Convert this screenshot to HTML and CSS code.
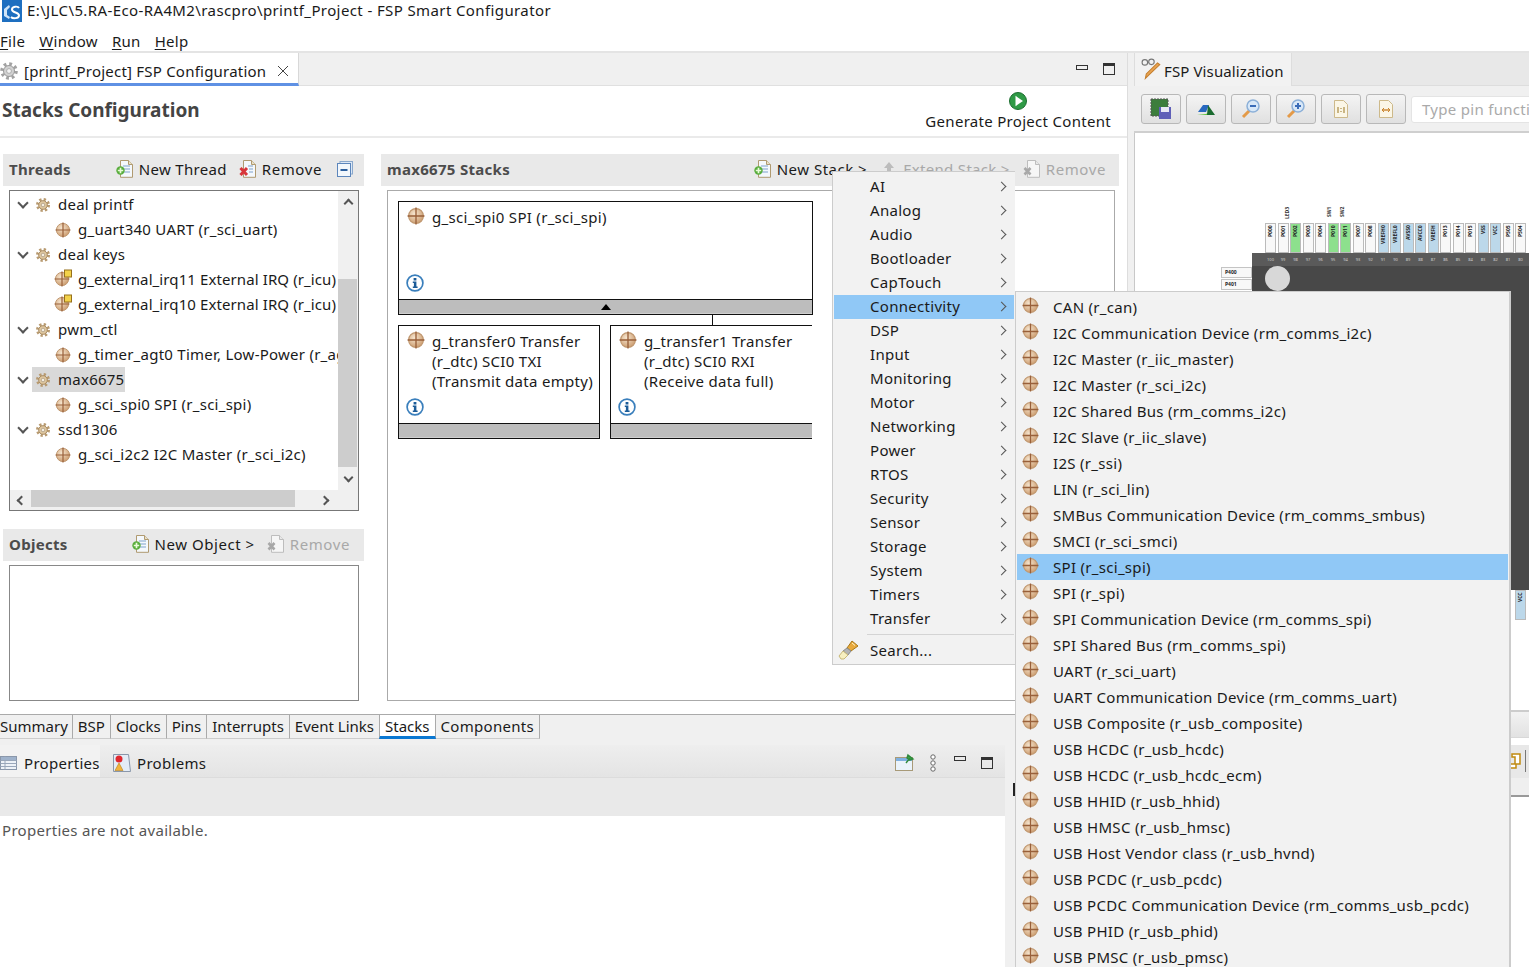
FILE: index.html
```html
<!DOCTYPE html>
<html lang="en">
<head>
<meta charset="utf-8">
<title>FSP Smart Configurator</title>
<link rel="stylesheet" href="styles.css">
</head>
<body>
<svg class="defs" width="0" height="0" aria-hidden="true">
  <defs>
    <radialGradient id="tg" cx="40%" cy="35%" r="70%"><stop offset="0" stop-color="#f6e6d0"/><stop offset="1" stop-color="#cb9a6c"/></radialGradient>
    <symbol id="target" viewBox="0 0 16 16">
      <circle cx="8" cy="8" r="6.6" fill="url(#tg)" stroke="#c09870" stroke-width="1"/>
      <path d="M8 .5v15M.5 8h15" stroke="#99603a" stroke-width="1.200"/>
    </symbol>
    <symbol id="target-irq" viewBox="0 0 18 18">
      <circle cx="8" cy="10" r="6.6" fill="url(#tg)" stroke="#c09870"/>
      <path d="M8 2.500v15M.5 10h15" stroke="#99603a" stroke-width="1.200"/>
      <rect x="10.500" y="1" width="7" height="7" fill="#f3d24a" stroke="#96701c"/>
    </symbol>
    <symbol id="gear" viewBox="0 0 16 16">
      <circle cx="8" cy="8" r="5.500" fill="none" stroke="#b89a70" stroke-width="3" stroke-dasharray="2.200 2.120"/>
      <circle cx="8" cy="8" r="4.300" fill="#e0c8a0" stroke="#a88a60"/>
      <circle cx="8" cy="8" r="1.800" fill="#f6eee0" stroke="#9a8a72" stroke-width=".6"/>
    </symbol>
    <symbol id="gear-gray" viewBox="0 0 18 18">
      <circle cx="9" cy="9" r="7" fill="none" stroke="#a2a2a2" stroke-width="3.600" stroke-dasharray="2.700 2.800"/>
      <circle cx="9" cy="9" r="5.500" fill="#d2d2d2" stroke="#9a9a9a"/>
      <circle cx="9" cy="9" r="2.400" fill="#f4f4f4" stroke="#9a9a9a" stroke-width=".7"/>
    </symbol>
    <symbol id="doc-add" viewBox="0 0 18 18">
      <path d="M4.500 .5h8l4 4v12.800h-12z" fill="#f4f8fc" stroke="#b09a70"/>
      <path d="M7 6h7M7 9h7M7 12h7" stroke="#7fa2cc"/>
      <path d="M12.500 .5v4h4" fill="#e8e0c8" stroke="#b09a70"/>
      <circle cx="4.500" cy="10.500" r="4.200" fill="#58ad3c"/>
      <path d="M4.500 7.800v5.400M1.800 10.500h5.400" stroke="#e8fbd8" stroke-width="1.700"/>
    </symbol>
    <symbol id="doc-del" viewBox="0 0 18 18">
      <path d="M4.500 .5h8l4 4v12.800h-12z" fill="#f4f8fc" stroke="#b09a70"/>
      <path d="M9 6h5M10 9h4M10 12h4" stroke="#7fa2cc"/>
      <path d="M12.500 .5v4h4" fill="#e8e0c8" stroke="#b09a70"/>
      <path d="M1.500 8l6.500 7M8 8l-6.500 7" stroke="#d8363a" stroke-width="3"/>
    </symbol>
    <symbol id="doc-del-off" viewBox="0 0 18 18">
      <path d="M4.500 .5h8l4 4v12.800h-12z" fill="#f6f6f6" stroke="#bdbdbd"/>
      <path d="M12.500 .5v4h4" fill="#e8e8e8" stroke="#bdbdbd"/>
      <path d="M1.500 8l6 6.500M7.500 8l-6 6.500" stroke="#a8a8a8" stroke-width="2.600"/>
    </symbol>
    <symbol id="info" viewBox="0 0 18 18">
      <circle cx="9" cy="9" r="7.900" fill="#fff" stroke="#3a7fbc" stroke-width="1.700"/>
      <path d="M7.600 4h2.800v2.400H7.600zM6.800 7.500h3.600v5h1.200v1.500H6.800v-1.500h1.100V9H6.800z" fill="#1c5c98"/>
    </symbol>
  </defs>
</svg>

<header class="titlebar">
  <svg class="app-icon" viewBox="0 0 22 22"><rect x="2" width="20" height="22" fill="#1e6fc0"/><path d="M4 9l5-4 1 2-3 3v5l3 2-1 2-5-3z" fill="#cfe4f7"/><path d="M19 8c-1-2-7-2-7 1.500 0 3.500 7 2.500 7 6 0 3-6 3.500-8 1.500" fill="none" stroke="#fff" stroke-width="2"/></svg>
  <span>E:\JLC\5.RA-Eco-RA4M2\rascpro\printf_Project - FSP Smart Configurator</span>
</header>
<nav class="menubar">
  <span><u>F</u>ile</span><span><u>W</u>indow</span><span><u>R</u>un</span><span><u>H</u>elp</span>
</nav>

<main class="workbench">
  <section class="editor">
    <div class="editor-tabs">
      <div class="editor-tab">
        <svg class="ic18"><use href="#gear-gray"/></svg>
        <span>[printf_Project] FSP Configuration</span>
        <svg class="close" viewBox="0 0 12 12"><path d="M1 1l10 10M11 1L1 11" stroke="#444" fill="none"/></svg>
      </div>
      <div class="win-buttons">
        <span class="btn-min"></span><span class="btn-max"></span>
      </div>
    </div>
    <div class="form-head">
      <h1>Stacks Configuration</h1>
      <div class="generate">
        <svg class="gen-ic" viewBox="0 0 18 18"><circle cx="9" cy="9" r="8.500" fill="#2f9a46" stroke="#1c6e30"/><path d="M6.500 3.800v10.400L14 9z" fill="#fff"/></svg>
        <span>Generate Project Content</span>
      </div>
    </div>

    <div class="panels">
      <div class="col-left">
        <div class="panel-head threads-head">
          <b>Threads</b>
          <div class="actions">
            <span class="act"><svg class="ic18"><use href="#doc-add"/></svg>New Thread</span>
            <span class="act"><svg class="ic18"><use href="#doc-del"/></svg>Remove</span>
            <svg class="collapse" viewBox="0 0 16 16"><rect x="3" y=".5" width="12.500" height="12.500" fill="#dce8f6" stroke="#8aa8cc"/><rect x=".5" y="2.500" width="13" height="13" fill="#f2f7fc" stroke="#5c86bc"/><path d="M3.500 9h7" stroke="#2c5f9e" stroke-width="2"/></svg>
          </div>
        </div>
        <div class="tree-box">
          <div class="tree">
            <div class="node"><i class="chev"></i><svg class="ic16"><use href="#gear"/></svg><span>deal printf</span></div>
            <div class="leaf"><svg class="ic16"><use href="#target"/></svg><span>g_uart340 UART (r_sci_uart)</span></div>
            <div class="node"><i class="chev"></i><svg class="ic16"><use href="#gear"/></svg><span>deal keys</span></div>
            <div class="leaf"><svg class="ic18"><use href="#target-irq"/></svg><span>g_external_irq11 External IRQ (r_icu)</span></div>
            <div class="leaf"><svg class="ic18"><use href="#target-irq"/></svg><span>g_external_irq10 External IRQ (r_icu)</span></div>
            <div class="node"><i class="chev"></i><svg class="ic16"><use href="#gear"/></svg><span>pwm_ctl</span></div>
            <div class="leaf"><svg class="ic16"><use href="#target"/></svg><span>g_timer_agt0 Timer, Low-Power (r_agt)</span></div>
            <div class="node"><i class="chev"></i><svg class="ic16"><use href="#gear"/></svg><span class="sel">max6675</span></div>
            <div class="leaf"><svg class="ic16"><use href="#target"/></svg><span>g_sci_spi0 SPI (r_sci_spi)</span></div>
            <div class="node"><i class="chev"></i><svg class="ic16"><use href="#gear"/></svg><span>ssd1306</span></div>
            <div class="leaf"><svg class="ic16"><use href="#target"/></svg><span>g_sci_i2c2 I2C Master (r_sci_i2c)</span></div>
          </div>
          <div class="vbar"><i class="up"></i><div class="vtrack"><div class="vthumb"></div></div><i class="down"></i></div>
          <div class="hbar"><i class="left"></i><div class="htrack"><div class="hthumb"></div></div><i class="right"></i></div>
          <div class="corner"></div>
        </div>
        <div class="panel-head objects">
          <b>Objects</b>
          <div class="actions">
            <span class="act"><svg class="ic18"><use href="#doc-add"/></svg>New Object &gt;</span>
            <span class="act off"><svg class="ic18"><use href="#doc-del-off"/></svg>Remove</span>
          </div>
        </div>
        <div class="obj-box"></div>
      </div>

      <div class="col-right">
        <div class="panel-head stacks-head">
          <b>max6675 Stacks</b>
          <div class="actions">
            <span class="act"><svg class="ic18"><use href="#doc-add"/></svg>New Stack &gt;</span>
            <span class="act off"><svg class="ic18" viewBox="0 0 18 18"><path d="M1 13h16v3H1zM7 12V8H4l5-6 5 6h-3v4z" fill="#bcbcbc"/></svg>Extend Stack &gt;</span>
            <span class="act off"><svg class="ic18"><use href="#doc-del-off"/></svg>Remove</span>
          </div>
        </div>
        <div class="stack-box">
          <article class="card card-top">
            <div class="card-title"><svg class="ic18"><use href="#target"/></svg><span>g_sci_spi0 SPI (r_sci_spi)</span></div>
            <svg class="info"><use href="#info"/></svg>
            <div class="card-bar"><i class="tri"></i></div>
          </article>
          <div class="connector"></div>
          <div class="card-row">
            <article class="card">
              <div class="card-title"><svg class="ic18"><use href="#target"/></svg><span>g_transfer0 Transfer (r_dtc) SCI0 TXI (Transmit data empty)</span></div>
              <svg class="info"><use href="#info"/></svg>
              <div class="card-bar"></div>
            </article>
            <article class="card card-open">
              <div class="card-title"><svg class="ic18"><use href="#target"/></svg><span>g_transfer1 Transfer (r_dtc) SCI0 RXI (Receive data full)</span></div>
              <svg class="info"><use href="#info"/></svg>
              <div class="card-bar"></div>
            </article>
          </div>
        </div>
      </div>
    </div>

    <div class="page-tabs">
      <span>Summary</span><span>BSP</span><span>Clocks</span><span>Pins</span><span>Interrupts</span><span>Event Links</span><span class="on">Stacks</span><span class="wide">Components</span>
    </div>

    <div class="lower">
      <div class="props">
        <div class="props-tabs">
          <span class="ptab on">
            <svg class="ic18" viewBox="0 0 18 18"><rect x=".5" y="2.500" width="16" height="13" fill="#eef2f7" stroke="#8a97aa"/><path d="M.5 6.500h16M.5 9.500h16M.5 12.500h16M5 2.500v13" stroke="#9aa7ba"/><rect x="1" y="3" width="15" height="3" fill="#9fb2cb"/></svg>
            Properties</span>
          <span class="ptab">
            <svg class="ic18" viewBox="0 0 18 18"><path d="M.5.5h15l2 17H.5z" fill="#e4ecf6" stroke="#8a97aa"/><circle cx="6" cy="5" r="3.500" fill="#e0282e"/><path d="M6 9l4 7.500H2z" fill="#f2b43c" stroke="#b57e18" stroke-width=".6"/></svg>
            Problems</span>
          <div class="props-tools">
            <svg class="ic20" viewBox="0 0 20 20"><rect x=".5" y="4.500" width="17" height="13" fill="#eaf3fb" stroke="#a89a78"/><rect x="1" y="5" width="16" height="3" fill="#7fb0e0"/><path d="M11 10l4-5M13 2l5 4-3 1-3-2z" stroke="#2f8a3c" fill="#38a848" stroke-width="1.400"/></svg>
            <svg class="dots" viewBox="0 0 8 18"><circle cx="4" cy="3" r="2.200"/><circle cx="4" cy="9" r="2.200"/><circle cx="4" cy="15" r="2.200"/></svg>
            <span class="btn-min"></span><span class="btn-max"></span>
          </div>
        </div>
        <div class="props-band"></div>
        <p class="props-empty">Properties are not available.</p>
      </div>
      <div class="lower-side"><i></i></div>
    </div>
  </section>

  <section class="viz">
    <div class="viz-tabs">
      <div class="viz-tab">
        <svg class="ic22" viewBox="0 0 20 20"><circle cx="3.500" cy="4" r="2.500" fill="none" stroke="#777"/><circle cx="9.500" cy="3.500" r="2.500" fill="none" stroke="#777"/><path d="M6 4h1" stroke="#777"/><path d="M17 6L7 15.500l-3 3 .8-4L15 4.500z" fill="#eaa452" stroke="#c47f2e"/></svg>
        <span>FSP Visualization</span>
      </div>
    </div>
    <div class="viz-tools">
      <button class="tb"><svg viewBox="0 0 22 22"><rect x="1" y="1" width="17" height="17" fill="#3c7d3c" stroke="#555" stroke-dasharray="2 1"/><rect x="9" y="9" width="12" height="12" fill="#5f5fb8"/><rect x="11" y="9" width="8" height="5" fill="#e8e8f4"/></svg></button>
      <button class="tb"><svg viewBox="0 0 22 22"><path d="M3 14l5-7h6l-3 7z" fill="#2868c0"/><path d="M2 17l9-1 2-1v2z" fill="#5ec43c"/><path d="M13 7l7 10h-8z" fill="#1a6b2f"/></svg></button>
      <button class="tb"><svg viewBox="0 0 22 22"><path d="M10 12l-7 7" stroke="#e49a48" stroke-width="3"/><circle cx="13" cy="8" r="6" fill="#d8e8f8" stroke="#8cb0d8" stroke-width="1.500"/><path d="M10 8h6" stroke="#3a6cb8" stroke-width="2"/></svg></button>
      <button class="tb"><svg viewBox="0 0 22 22"><path d="M10 12l-7 7" stroke="#e49a48" stroke-width="3"/><circle cx="13" cy="8" r="6" fill="#d8e8f8" stroke="#8cb0d8" stroke-width="1.500"/><path d="M10 8h6M13 5v6" stroke="#3a6cb8" stroke-width="2"/></svg></button>
      <button class="tb"><svg viewBox="0 0 22 22"><path d="M4.500 2.500h9l4 4v13h-13z" fill="#fbf6e6" stroke="#cdb98a"/><path d="M8 9v6M11 10v1M11 13v1M14 9v6" stroke="#b59a5a" stroke-width="1.400"/></svg></button>
      <button class="tb"><svg viewBox="0 0 22 22"><path d="M4.500 2.500h9l4 4v13h-13z" fill="#fbf6e6" stroke="#cdb98a"/><path d="M7 12h8" stroke="#c9852e" stroke-width="1.400"/><path d="M9 10l-2 2 2 2M13 10l2 2-2 2" stroke="#c9852e" fill="none"/></svg></button>
      <div class="search">Type pin function</div>
    </div>
    <div class="canvas">
      <div class="pin-tags">
        <span class="tag">LED3</span><span class="tag tag2">SW1</span><span class="tag">SW2</span>
      </div>
      <div class="pins">
        <span>P000</span><span>P001</span><span class="g">P002</span><span>P003</span><span>P004</span><span class="g">P010</span><span class="g">P011</span><span>P007</span><span>P008</span><span class="b">VREFH0</span><span class="b">VREFL0</span><span class="b">AVSS0</span><span class="b">AVCC0</span><span class="b">VREFH</span><span>P013</span><span>P014</span><span>P015</span><span class="b">VSS</span><span class="b">VCC</span><span>P505</span><span>P504</span>
      </div>
      <div class="chip">
        <div class="chip-edge">
          <span>100</span><span>99</span><span>98</span><span>97</span><span>96</span><span>95</span><span>94</span><span>93</span><span>92</span><span>91</span><span>90</span><span>89</span><span>88</span><span>87</span><span>86</span><span>85</span><span>84</span><span>83</span><span>82</span><span>81</span><span>80</span>
        </div>
        <div class="chip-dot"></div>
      </div>
      <div class="left-pins"><span>P400</span><span>P401</span></div>
      <div class="pins pins-bottom"><span class="b">VCC</span></div>
    </div>
    <div class="viz-lower">
      <div class="viz-band"></div>
      <div class="viz-strip"><svg viewBox="0 0 12 16"><path d="M3 1h8v10H7v4H1v-4h5V4H3z" fill="#fff" stroke="#c08a10" stroke-width="1.500"/></svg><i></i></div>
    </div>
  </section>
</main>

<div class="menu menu-main">
  <ul>
    <li>AI</li><li>Analog</li><li>Audio</li><li>Bootloader</li><li>CapTouch</li><li class="hl">Connectivity</li><li>DSP</li><li>Input</li><li>Monitoring</li><li>Motor</li><li>Networking</li><li>Power</li><li>RTOS</li><li>Security</li><li>Sensor</li><li>Storage</li><li>System</li><li>Timers</li><li>Transfer</li>
  </ul>
  <div class="menu-sep"></div>
  <div class="menu-search">
    <svg viewBox="0 0 22 22"><path d="M10 9l5-7 6 5-7 5z" fill="#e8a93c" stroke="#a87818"/><path d="M15 4l3 2.500" stroke="#fff3c8"/><path d="M10 9l4 3-3 4-5-4z" fill="#b4b4b4" stroke="#8c8c8c"/><path d="M6 12l5 4-4 4H4l-2-3z" fill="#f8f0c0" stroke="#c8b878"/></svg>
    <span>Search...</span>
  </div>
</div>

<div class="menu menu-sub">
  <ul>
    <li><svg><use href="#target"/></svg>CAN (r_can)</li>
    <li><svg><use href="#target"/></svg>I2C Communication Device (rm_comms_i2c)</li>
    <li><svg><use href="#target"/></svg>I2C Master (r_iic_master)</li>
    <li><svg><use href="#target"/></svg>I2C Master (r_sci_i2c)</li>
    <li><svg><use href="#target"/></svg>I2C Shared Bus (rm_comms_i2c)</li>
    <li><svg><use href="#target"/></svg>I2C Slave (r_iic_slave)</li>
    <li><svg><use href="#target"/></svg>I2S (r_ssi)</li>
    <li><svg><use href="#target"/></svg>LIN (r_sci_lin)</li>
    <li><svg><use href="#target"/></svg>SMBus Communication Device (rm_comms_smbus)</li>
    <li><svg><use href="#target"/></svg>SMCI (r_sci_smci)</li>
    <li class="hl"><svg><use href="#target"/></svg>SPI (r_sci_spi)</li>
    <li><svg><use href="#target"/></svg>SPI (r_spi)</li>
    <li><svg><use href="#target"/></svg>SPI Communication Device (rm_comms_spi)</li>
    <li><svg><use href="#target"/></svg>SPI Shared Bus (rm_comms_spi)</li>
    <li><svg><use href="#target"/></svg>UART (r_sci_uart)</li>
    <li><svg><use href="#target"/></svg>UART Communication Device (rm_comms_uart)</li>
    <li><svg><use href="#target"/></svg>USB Composite (r_usb_composite)</li>
    <li><svg><use href="#target"/></svg>USB HCDC (r_usb_hcdc)</li>
    <li><svg><use href="#target"/></svg>USB HCDC (r_usb_hcdc_ecm)</li>
    <li><svg><use href="#target"/></svg>USB HHID (r_usb_hhid)</li>
    <li><svg><use href="#target"/></svg>USB HMSC (r_usb_hmsc)</li>
    <li><svg><use href="#target"/></svg>USB Host Vendor class (r_usb_hvnd)</li>
    <li><svg><use href="#target"/></svg>USB PCDC (r_usb_pcdc)</li>
    <li><svg><use href="#target"/></svg>USB PCDC Communication Device (rm_comms_usb_pcdc)</li>
    <li><svg><use href="#target"/></svg>USB PHID (r_usb_phid)</li>
    <li><svg><use href="#target"/></svg>USB PMSC (r_usb_pmsc)</li>
  </ul>
</div>
</body>
</html>
```
FILE: styles.css
```css
* { box-sizing: border-box; }
html, body { margin: 0; height: 100%; }
body {
  width: 1529px; height: 967px; overflow: hidden; position: relative;
  background: #fff; color: #1a1a1a;
  font: 15px/20px "Noto Sans", "Open Sans", sans-serif;
  letter-spacing: .3px;
}
.defs { position: absolute; }
svg { display: block; flex: none; }
.ic16 { width: 16px; height: 16px; }
.ic18 { width: 18px; height: 18px; }
.ic20 { width: 20px; height: 20px; }
.ic22 { width: 22px; height: 22px; }

.titlebar { height: 22px; display: flex; align-items: center; gap: 5px; white-space: nowrap; letter-spacing: .39px; }
.titlebar span { margin-top: -2px; }
.app-icon { width: 22px; height: 22px; }
.menubar { height: 31px; display: flex; align-items: center; gap: 14px; padding-top: 9px; border-bottom: 2px solid #e4e4e4; }
.menubar u { text-underline-offset: 2px; }

.workbench { display: grid; grid-template-columns: 1128px 1fr; height: 914px; background: #f0f0f0; }
.editor { display: flex; flex-direction: column; min-width: 0; border-right: 1px solid #ddd; background: #fff; }

.editor-tabs { height: 33px; display: flex; background: #f0f0f0; border-bottom: 1px solid #e0e0e0; }
.editor-tab { width: 299px; height: 33px; display: flex; align-items: center; padding-top: 5px; background: #fff; border-bottom: 3px solid #5f91e4; border-right: 1px solid #d8d8d8; white-space: nowrap; letter-spacing: .22px; }
.editor-tab .ic18 { margin-right: 6px; }
.editor-tab .close { width: 12px; height: 12px; margin-left: 11px; }
.win-buttons { margin-left: auto; display: flex; align-items: center; gap: 15px; padding: 0 12px 4px 0; height: 32px; }
.win-buttons .btn-max { margin-top: 4px; }
.btn-min { width: 12px; height: 5px; border: 1px solid #333; display: block; }
.btn-max { width: 12px; height: 12px; border: 1px solid #333; border-top-width: 3px; display: block; }

.form-head { height: 52px; display: flex; justify-content: space-between; border-bottom: 2px solid #eaeaea; padding: 0 16px 0 2px; }
.form-head h1 { margin: 0; font-size: 19px; font-weight: 700; color: #444; line-height: 48px; letter-spacing: 0; }
.generate { display: flex; flex-direction: column; align-items: center; padding-top: 6px; gap: 1px; }
.gen-ic { width: 18px; height: 18px; }

.panels { height: 576px; display: flex; padding: 16px 0 0 3px; gap: 17px; }
.col-left { width: 361px; }
.col-right { width: 738px; }
.panel-head { height: 32px; display: flex; align-items: center; justify-content: space-between; background: #e9e9e9; padding: 0 0 2px 6px; white-space: nowrap; overflow: hidden; }
.panel-head b { color: #4c4c4c; font-weight: 700; font-size: 15px; }
.actions { display: flex; align-items: center; }
.act { display: flex; align-items: center; gap: 5px; margin-right: 13px; }
.act:last-of-type { letter-spacing: .6px; }
.threads-head .act { margin-right: 15px; }
.threads-head .act:first-child { margin-right: 12px; }
.stacks-head .act:first-child { letter-spacing: .5px; }
.objects .act { margin-right: 14px; }
.objects .act:first-child { margin-right: 12px; letter-spacing: .55px; }
.act.off { color: #a8a8a8; }
.collapse { width: 16px; height: 16px; margin-right: 11px; }

.tree-box { position: relative; width: 350px; height: 321px; margin: 4px 0 0 6px; border: 1px solid #777; display: grid; grid-template: 1fr 20px / 1fr 20px; }
.tree { overflow: hidden; padding-top: 1px; white-space: nowrap; letter-spacing: .25px; }
.node, .leaf { height: 25px; display: flex; align-items: center; }
.node { padding-left: 7px; }
.leaf { padding-left: 45px; }
.leaf span { margin: -2px 0 0 7px; }
.leaf .ic18 + span { margin-left: 6px; letter-spacing: .1px; }
.leaf .ic18 { margin-left: -1px; margin-top: -3px; }
.chev { width: 8px; height: 8px; border-right: 2px solid #555; border-bottom: 2px solid #555; transform: rotate(45deg); margin: -4px 8px 0 2px; display: block; }
.node span { margin-left: 6px; padding: 0 1px; height: 25px; line-height: 25px; }
.node .sel { background: #d9d9d9; margin-left: -19px; padding-left: 26px; padding-right: 1px; }
.node .ic16 { position: relative; z-index: 1; }
.vbar { background: #f0f0f0; display: flex; flex-direction: column; align-items: center; }
.vtrack { flex: 1; width: 100%; padding: 69px 1px 0 0; }
.vthumb { height: 188px; background: #cdcdcd; }
.hbar { background: #f0f0f0; display: flex; align-items: center; }
.htrack { flex: 1; height: 100%; padding: 0 20px 3px 0; }
.hthumb { height: 100%; background: #cdcdcd; }
.corner { background: #f0f0f0; }
.up, .down, .left, .right { display: block; width: 7px; height: 7px; border: solid #555; border-width: 2px 0 0 2px; flex: none; }
.up { transform: rotate(45deg); margin: 9px 0 3px; }
.down { transform: rotate(225deg); margin: 3px 0 9px; }
.left { transform: rotate(-45deg); margin: 0 6px 0 8px; }
.right { transform: rotate(135deg); margin: 0 10px 0 6px; }

.objects { margin-top: 18px; }
.obj-box { width: 350px; height: 136px; margin: 4px 0 0 6px; border: 1px solid #888; }

.stack-box { width: 728px; height: 511px; margin: 4px 0 0 6px; border: 1px solid #aaa; padding: 10px; overflow: hidden; }
.card { position: relative; width: 202px; height: 114px; border: 1px solid #111; display: flex; flex-direction: column; }
.card-top { width: 415px; }
.card-title { display: flex; gap: 7px; padding: 5px 6px 0 8px; height: 72px; }
.info { width: 18px; height: 18px; margin: auto 0 7px 7px; }
.card-bar { height: 15px; border-top: 1px solid #111; background: #bdbdbd; border-bottom: 1px solid #d0d0d0; display: flex; justify-content: center; }
.tri { width: 0; height: 0; margin-top: 4px; border: 5px solid transparent; border-top: 0; border-bottom: 6px solid #000; display: block; }
.connector { width: 1px; height: 10px; margin-left: 314px; background: #111; }
.card-row { display: flex; gap: 10px; }
.card-open { border-right: 0; }
.card-title span { width: 165px; }
.card-top .card-title span { width: auto; }

.page-tabs { height: 31px; display: flex; align-items: flex-start; background: #f0f0f0; border-top: 1px solid #aaa; white-space: nowrap; letter-spacing: 0; }
.page-tabs span { height: 24px; line-height: 22px; padding: 0 5px; border-right: 1px solid #aaa; border-bottom: 1px solid #ccc; }
.page-tabs span:first-child { padding: 0 4px 0 0; }
.page-tabs .on { background: #fff; border-bottom: 3px solid #0a78d2; border-left: 1px solid #aaa; margin-left: -1px; }
.page-tabs .wide { letter-spacing: .3px; }

.lower { flex: 1; display: flex; background: #fff; }
.props { width: 1005px; background: #fff; }
.props-tabs { height: 33px; display: flex; align-items: stretch; background: linear-gradient(#eeeeee, #e4e4e4); border-bottom: 1px solid #dcdcdc; }
.ptab { display: flex; align-items: center; gap: 6px; padding: 3px 0 0 0; }
.ptab.on { width: 100px; background: #f2f2f2; justify-content: flex-start; }
.ptab:not(.on) { margin-left: 13px; }
.props-tools { margin-left: auto; display: flex; align-items: center; gap: 14px; padding: 3px 12px 0 0; }
.props-tools .dots { margin-right: 3px; }
.props-tools .btn-min { margin: -8px 1px 0 0; }
.dots { width: 8px; height: 18px; fill: #fff; stroke: #666; }
.props-band { height: 38px; background: #e9e9e9; }
.props-empty { margin: 4px 0 0 2px; color: #555; }
.lower-side { flex: 1; background: #f0f0f0; padding: 38px 0 0 8px; }
.lower-side i { display: block; width: 2px; height: 13px; background: #222; }

.viz { display: flex; flex-direction: column; padding-left: 6px; min-width: 0; }
.viz-tabs { height: 33px; background: #e8e8e8; border-bottom: 1px solid #ddd; }
.viz-tab { width: 158px; height: 33px; display: flex; align-items: center; gap: 1px; background: #f2f2f2; padding: 3px 0 0 6px; border-right: 1px solid #ddd; border-left: 1px solid #ddd; white-space: nowrap; letter-spacing: .12px; }
.viz-tab .ic22 { margin-top: -4px; }
.viz-tools { height: 47px; display: flex; align-items: center; gap: 5px; padding: 1px 0 0 7px; background: #f0f0f0; border-bottom: 2px solid #cfcfcf; overflow: hidden; }
.tb { flex: none; width: 40px; height: 30px; padding: 0; display: flex; align-items: center; justify-content: center; border: 1px solid #b8b8b8; border-radius: 3px; background: linear-gradient(#f4f4f4, #e0e0e0); }
.tb svg { width: 22px; height: 22px; }
.search { flex: none; width: 180px; height: 27px; padding: 2px 0 0 10px; background: #fff; border: 1px solid #e4e4e4; border-radius: 3px; color: #aaa; font-size: 15px; white-space: nowrap; }
.canvas { position: relative; height: 577px; background: #fff; border-left: 1px solid #c8c8c8; overflow: hidden; letter-spacing: 0; }
.chip { position: absolute; left: 117px; top: 120px; right: 0; height: 337px; background: #484848; }
.chip-edge { height: 13px; background: #5a5a5a; display: flex; gap: 1.500px; padding-left: 13px; }
.chip-edge span { flex: none; width: 11px; font-size: 4px; line-height: 13px; text-align: center; color: #cfcfcf; }
.chip-dot { position: absolute; left: 13px; top: 13px; width: 25px; height: 25px; border-radius: 50%; background: #d8d8d8; }
.pins { position: absolute; left: 130px; top: 90px; display: flex; gap: 1.500px; }
.pins span { width: 11px; height: 30px; background: #f8f8f8; border: 1px solid #bbb; font-size: 5px; font-weight: 700; line-height: 9px; writing-mode: vertical-rl; transform: rotate(180deg); text-align: right; padding: 0 0 1px; color: #222; white-space: nowrap; overflow: hidden; }
.pins .g { background: #8de08d; }
.pins .b { background: #bcd8ea; }
.pins-bottom { left: 380px; top: 457px; }
.pin-tags { position: absolute; left: 148px; top: 74px; display: flex; }
.tag { font-size: 5px; font-weight: 700; line-height: 8px; width: 8px; writing-mode: vertical-rl; transform: rotate(180deg); color: #333; height: 14px; text-align: right; }
.tag2 { margin-left: 34px; margin-right: 5px; }
.left-pins { position: absolute; left: 86px; top: 134px; display: flex; flex-direction: column; gap: 1px; }
.left-pins span { width: 31px; height: 11px; border: 1px solid #c4c4c4; background: #f8f8f8; font-size: 5px; font-weight: 700; line-height: 9px; padding-left: 3px; color: #222; }
.viz-lower { flex: 1; position: relative; background: #fff; }
.viz-band { height: 28px; border-top: 2px solid #ccc; background: linear-gradient(#f2f2f2, #e2e2e2); border-bottom: 1px solid #d8d8d8; }
.viz-strip { height: 52px; margin-top: 7px; background: linear-gradient(#e8e8e8 33px, #efefef 33px); border-bottom: 2px solid #999; display: flex; align-items: flex-start; gap: 4px; padding: 5px 0 0 375px; }
.viz-strip svg { width: 12px; height: 16px; margin-top: 3px; }
.viz-strip i { width: 1px; height: 22px; background: #777; display: block; }

.menu { position: absolute; background: #f2f2f2; border: 1px solid #ccc; overflow: hidden; white-space: nowrap; }
.menu ul { list-style: none; margin: 0; padding: 0; }
.menu-main { left: 832px; top: 171px; width: 183px; height: 494px; padding: 3px 1px; border-right: 0; }
.menu-main li { position: relative; height: 24px; line-height: 22px; padding-left: 36px; }
.menu-main li::after { content: ""; position: absolute; right: 9px; top: 8px; width: 6px; height: 6px; border: solid #555; border-width: 1px 1px 0 0; transform: rotate(45deg); }
.menu-main .hl { background: #90c8f6; }
.menu-sep { height: 1px; background: #d4d4d4; margin: 3px 0 0 33px; }
.menu-search { display: flex; align-items: center; height: 30px; padding-left: 3px; gap: 11px; }
.menu-search svg { width: 22px; height: 22px; }
.menu-sub { left: 1015px; top: 291px; width: 496px; height: 690px; padding: 2px 1px 0 1px; border-width: 1px 2px 0 1px; border-color: #ccc; }
.menu-sub li { height: 26px; display: flex; align-items: center; padding: 0 0 1px 6px; }
.menu-sub li svg { width: 17px; height: 17px; margin: -2px 14px 0 -1px; }
.menu-sub .hl { background: #90c8f6; }
```
